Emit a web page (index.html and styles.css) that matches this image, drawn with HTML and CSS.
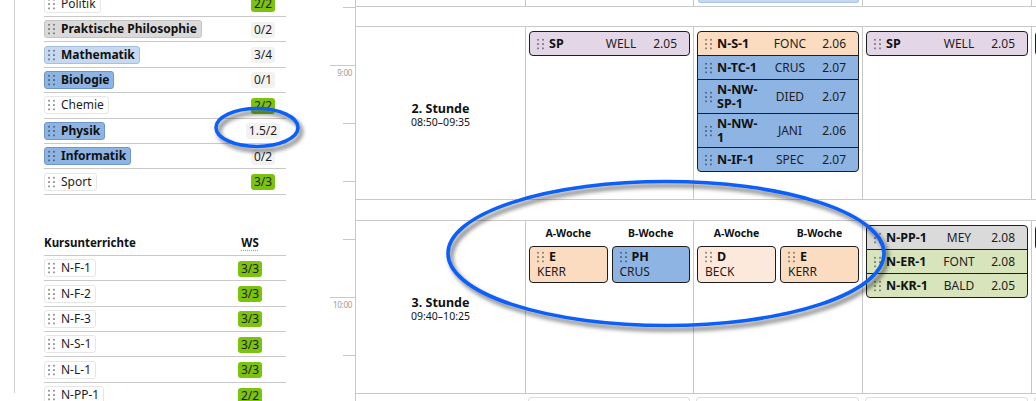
FILE: index.html
```html
<!DOCTYPE html>
<html lang="de">
<head>
<meta charset="utf-8">
<title>Stundenplan</title>
<link rel="stylesheet" href="styles.css">
</head>
<body>
<div class="app">
  <aside class="side">
    <div class="side-inner">
      <div class="list subj">
        <div class="lrow"><span class="name"><span class="pill"><i class="grip"></i>Politik</span></span><span class="cnt"><span class="num ok">2/2</span></span></div>
        <div class="lrow"><span class="name"><span class="pill b gray"><i class="grip"></i>Praktische Philosophie</span></span><span class="cnt"><span class="num">0/2</span></span></div>
        <div class="lrow"><span class="name"><span class="pill b lblue"><i class="grip"></i>Mathematik</span></span><span class="cnt"><span class="num">3/4</span></span></div>
        <div class="lrow"><span class="name"><span class="pill b blue"><i class="grip"></i>Biologie</span></span><span class="cnt"><span class="num">0/1</span></span></div>
        <div class="lrow"><span class="name"><span class="pill"><i class="grip"></i>Chemie</span></span><span class="cnt"><span class="num ok">2/2</span></span></div>
        <div class="lrow"><span class="name"><span class="pill b blue"><i class="grip"></i>Physik</span></span><span class="cnt"><span class="num">1.5/2</span></span></div>
        <div class="lrow"><span class="name"><span class="pill b blue"><i class="grip"></i>Informatik</span></span><span class="cnt"><span class="num">0/2</span></span></div>
        <div class="lrow"><span class="name"><span class="pill"><i class="grip"></i>Sport</span></span><span class="cnt"><span class="num ok">3/3</span></span></div>
      </div>
      <div class="list kurs">
        <div class="lrow head"><span class="name">Kursunterrichte</span><span class="cnt"><abbr title="Wochenstunden">WS</abbr></span></div>
        <div class="lrow"><span class="name"><span class="pill"><i class="grip"></i>N-F-1</span></span><span class="cnt"><span class="num ok">3/3</span></span></div>
        <div class="lrow"><span class="name"><span class="pill"><i class="grip"></i>N-F-2</span></span><span class="cnt"><span class="num ok">3/3</span></span></div>
        <div class="lrow"><span class="name"><span class="pill"><i class="grip"></i>N-F-3</span></span><span class="cnt"><span class="num ok">3/3</span></span></div>
        <div class="lrow"><span class="name"><span class="pill"><i class="grip"></i>N-S-1</span></span><span class="cnt"><span class="num ok">3/3</span></span></div>
        <div class="lrow"><span class="name"><span class="pill"><i class="grip"></i>N-L-1</span></span><span class="cnt"><span class="num ok">3/3</span></span></div>
        <div class="lrow"><span class="name"><span class="pill"><i class="grip"></i>N-PP-1</span></span><span class="cnt"><span class="num ok">2/2</span></span></div>
      </div>
    </div>
  </aside>

  <main class="plan">
    <div class="axis">
      <div class="tick"></div>
      <div class="tick hour"><span>9:00</span></div>
      <div class="tick"></div>
      <div class="tick"></div>
      <div class="tick"></div>
      <div class="tick hour"><span>10:00</span></div>
      <div class="tick"></div>
    </div>

    <div class="grid">
      <div class="lesson tail">
        <div class="label"></div>
        <div class="cell"></div>
        <div class="cell"><div class="tailcard"></div></div>
        <div class="cell"></div>
        <div class="cell"></div>
      </div>
      <div class="pause"></div>

      <div class="lesson">
        <div class="label"><b>2. Stunde</b><span>08:50–09:35</span></div>
        <div class="cell">
          <div class="stack">
            <div class="item lilac"><i class="grip"></i><span class="n">SP</span><span class="t">WELL</span><span class="r">2.05</span></div>
          </div>
        </div>
        <div class="cell">
          <div class="stack">
            <div class="item peach"><i class="grip"></i><span class="n">N-S-1</span><span class="t">FONC</span><span class="r">2.06</span></div>
            <div class="item blue"><i class="grip"></i><span class="n">N-TC-1</span><span class="t">CRUS</span><span class="r">2.07</span></div>
            <div class="item blue"><i class="grip"></i><span class="n">N-NW-SP-1</span><span class="t">DIED</span><span class="r">2.07</span></div>
            <div class="item blue"><i class="grip"></i><span class="n">N-NW-1</span><span class="t">JANI</span><span class="r">2.06</span></div>
            <div class="item blue"><i class="grip"></i><span class="n">N-IF-1</span><span class="t">SPEC</span><span class="r">2.07</span></div>
          </div>
        </div>
        <div class="cell">
          <div class="stack">
            <div class="item lilac"><i class="grip"></i><span class="n">SP</span><span class="t">WELL</span><span class="r">2.05</span></div>
          </div>
        </div>
        <div class="cell">
          <div class="stack">
            <div class="item peach"><i class="grip"></i><span class="n">E</span><span class="t">KERR</span><span class="r">2.04</span></div>
          </div>
        </div>
      </div>
      <div class="pause p2"></div>

      <div class="lesson">
        <div class="label"><b>3. Stunde</b><span>09:40–10:25</span></div>
        <div class="cell">
          <div class="split">
            <div class="wk">A-Woche</div>
            <div class="wk">B-Woche</div>
            <div class="wcard peach"><span class="n"><i class="grip"></i>E</span><span class="t">KERR</span></div>
            <div class="wcard blue"><span class="n"><i class="grip"></i>PH</span><span class="t">CRUS</span></div>
          </div>
        </div>
        <div class="cell">
          <div class="split">
            <div class="wk">A-Woche</div>
            <div class="wk">B-Woche</div>
            <div class="wcard peach2"><span class="n"><i class="grip"></i>D</span><span class="t">BECK</span></div>
            <div class="wcard peach"><span class="n"><i class="grip"></i>E</span><span class="t">KERR</span></div>
          </div>
        </div>
        <div class="cell">
          <div class="stack">
            <div class="item gray"><i class="grip"></i><span class="n">N-PP-1</span><span class="t">MEY</span><span class="r">2.08</span></div>
            <div class="item green"><i class="grip"></i><span class="n">N-ER-1</span><span class="t">FONT</span><span class="r">2.08</span></div>
            <div class="item green"><i class="grip"></i><span class="n">N-KR-1</span><span class="t">BALD</span><span class="r">2.05</span></div>
          </div>
        </div>
        <div class="cell">
          <div class="stack">
            <div class="item peach"><i class="grip"></i><span class="n">E</span><span class="t">KERR</span><span class="r">2.04</span></div>
          </div>
        </div>
      </div>

      <div class="pause next">
        <div class="label"></div>
        <div class="cell"><div class="ghost"></div></div>
        <div class="cell"><div class="ghost"></div></div>
        <div class="cell"><div class="ghost"></div></div>
        <div class="cell"><div class="ghost"></div></div>
      </div>
    </div>
  </main>

  <svg class="marks" width="1036" height="401" viewBox="0 0 1036 401" aria-hidden="true">
    <defs>
      <filter id="sh" x="-20%" y="-30%" width="140%" height="170%">
        <feDropShadow dx="3" dy="4" stdDeviation="2" flood-color="#000" flood-opacity="0.55"/>
      </filter>
    </defs>
    <ellipse cx="257" cy="127.5" rx="41" ry="19" fill="none" stroke="#0b5ff5" stroke-width="3.6" filter="url(#sh)"/>
    <ellipse cx="666" cy="253.5" rx="218" ry="72" fill="none" stroke="#0b5ff5" stroke-width="3.6" filter="url(#sh)"/>
  </svg>
</div>
</body>
</html>
```

FILE: styles.css
```css
* { box-sizing: border-box; }
html, body { margin: 0; padding: 0; }
body {
  font-family: "Noto Sans", "Open Sans", sans-serif;
  font-size: 12px;
  color: #1e1e1e;
  background: #fff;
  width: 1036px;
  height: 401px;
  overflow: hidden;
}
.app {
  position: relative;
  display: flex;
  height: 401px;
  overflow: hidden;
}

/* ---------- left panel ---------- */
.side { flex: none; width: 330px; height: 100%; padding-left: 14px; }
.side-inner { height: 100%; border-left: 1px solid #d0d0d0; padding-left: 29px; }
.list { width: 242px; }
.subj { margin-top: -8.4px; }
.kurs { margin-top: 35.8px; }
.lrow {
  display: flex;
  align-items: center;
  height: 25.4px;
  border-bottom: 1px solid #c9c9c9;
}
.lrow .name { flex: 1; min-width: 0; display: flex; }
.subj .cnt { width: 46px; text-align: center; }
.kurs .cnt { width: 72px; text-align: center; }
.head { font-weight: 700; font-size: 11.5px; color: #111; }
abbr {
  text-decoration: underline dotted #9a9a9a;
  text-underline-offset: 3px;
}
.pill {
  display: inline-flex;
  align-items: center;
  height: 18px;
  padding: 0 4px 0 3px;
  border: 1px solid #e6e6e6;
  border-radius: 3px;
  background: #fff;
  line-height: 16px;
  white-space: nowrap;
}
.pill.b { font-weight: 700; color: #111; }
.pill .grip { margin-right: 6px; }
.num {
  display: inline-block;
  padding: 0 3px;
  line-height: 16px;
  border-radius: 3px;
  background: #f2f2f2;
}
.num.ok { background: #7bc30e; }

.grip {
  display: inline-block;
  flex: none;
  width: 7px;
  height: 12px;
  background-image: radial-gradient(circle at 1px 1.6px, rgba(0,0,0,0.4) 0.8px, transparent 1.2px);
  background-size: 5px 4.33px;
}

/* ---------- colours ---------- */
.gray { background: #dadada; border-color: #c3c3c3; }
.lblue { background: #c6d9f1; border-color: #a7c0e2; }
.blue { background: #8db4e2; border-color: #6f96c9; }
.lilac { background: #e3d6e7; border-color: #cbb7d1; }
.peach { background: #fcdcc1; border-color: #eec3a2; }
.peach2 { background: #fde9dc; border-color: #f1d2bd; }
.green { background: #d8e4bc; border-color: #bccf95; }

/* ---------- plan ---------- */
.plan { flex: 1; min-width: 0; height: 100%; display: flex; overflow: hidden; }
.axis {
  flex: none;
  width: 26px;
  border-right: 1px solid #c8c8c8;
  padding-top: 7px;
}
.tick {
  height: 58px;
  display: flex;
  flex-direction: column;
  align-items: flex-end;
}
.tick::before { content: ""; width: 12px; height: 1px; background: #c8c8c8; }
.tick.hour::before { width: 25px; }
.tick span {
  font-size: 8px;
  line-height: 8px;
  color: #9a9a9a;
  margin: 3px 3px 0 0;
  letter-spacing: -0.3px;
}

.grid {
  flex: 1;
  min-width: 0;
  overflow: hidden;
  display: flex;
  flex-direction: column;
}
.lesson, .pause.next {
  display: grid;
  grid-template-columns: 169px 168px 169px 169px 169px;
}
.lesson {
  flex: none;
  height: 174px;
  border-top: 1px solid #c8c8c8;
  border-bottom: 1px solid #c8c8c8;
}
.lesson.tail { height: 7px; border-top: 0; }
.pause { flex: none; height: 19px; }
.pause.p2 { height: 20px; }
.pause.next { flex: 1; height: auto; padding-top: 3px; }
.cell {
  min-width: 0;
  border-left: 1px solid #c8c8c8;
  padding: 4px 3px 0;
}
.tail .cell { padding: 0 3px 0 4px; }
.pause .cell { border-left: 0; padding: 0 3px; }
.tailcard {
  height: 3px;
  background: #c6d9f1;
  border: 1px solid #a9c3e6;
  border-top: 0;
  border-radius: 0 0 4px 4px;
}
.ghost {
  height: 12px;
  border: 1px solid #dedede;
  border-bottom: 0;
  border-radius: 4px 4px 0 0;
  background: #fff;
}

.label {
  display: flex;
  flex-direction: column;
  align-items: center;
  justify-content: center;
  padding-top: 4px;
  text-align: center;
  color: #111;
}
.label b { font-size: 12.5px; line-height: 15px; }
.label span { font-size: 10.5px; line-height: 13px; }

.stack { display: flex; flex-direction: column; }
.item {
  display: grid;
  grid-template-columns: 12px 1fr 44px 34px;
  align-items: center;
  padding: 3px 12px 3px 7px;
  line-height: 17px;
  border: 1px solid;
  white-space: nowrap;
}
.item + .item { margin-top: -1px; }
.item:first-child { border-top-left-radius: 4px; border-top-right-radius: 4px; }
.item:last-child { border-bottom-left-radius: 4px; border-bottom-right-radius: 4px; }
.item .n {
  max-width: 45px;
  font-weight: 700;
  font-size: 12.5px;
  line-height: 13.5px;
  white-space: normal;
  color: #111;
}
.item .t { text-align: center; }
.item .r { text-align: right; }

.split {
  display: grid;
  grid-template-columns: 1fr 1fr;
  column-gap: 4px;
}
.wk {
  text-align: center;
  font-weight: 700;
  font-size: 10.5px;
  line-height: 17px;
  margin-bottom: 4px;
  color: #111;
}
.wcard {
  display: flex;
  flex-direction: column;
  border: 1px solid;
  border-radius: 4px;
  padding: 2px 6px 3px 7px;
  line-height: 15px;
}
.wcard .n {
  display: flex;
  align-items: center;
  font-weight: 700;
  font-size: 12.5px;
  color: #111;
}
.wcard .grip { margin-right: 5px; }

/* ---------- annotations ---------- */
.marks {
  position: absolute;
  left: 0;
  top: 0;
  pointer-events: none;
}
```
